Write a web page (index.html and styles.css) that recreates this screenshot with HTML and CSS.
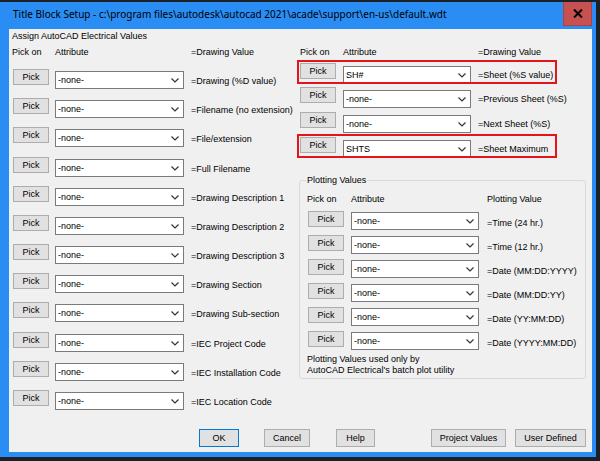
FILE: index.html
```html
<!DOCTYPE html>
<html>
<head>
<meta charset="utf-8">
<title>Title Block Setup</title>
<link rel="stylesheet" href="styles.css">
</head>
<body>
<div class="window">
  <div class="titlebar">
    <span class="title">Title Block Setup - c:\program files\autodesk\autocad 2021\acade\support\en-us\default.wdt</span>
    <div class="close"><svg width="10" height="9" viewBox="0 0 10 9"><path d="M1 0.5 L9 8.5 M9 0.5 L1 8.5" stroke="#000" stroke-width="2" fill="none"/></svg></div>
  </div>
  <div class="client">
    <div class="assign">Assign AutoCAD Electrical Values</div>
    <div class="columns">
      <div class="left">
        <div class="hdr"><span class="lc1">Pick on</span><span class="lc2">Attribute</span><span>=Drawing Value</span></div>
        <div class="lrow"><div class="pick">Pick</div><div class="combo"><span>-none-</span><svg class="chev" width="8" height="5" viewBox="0 0 8 5"><polyline points="0.5,0.5 4,4 7.5,0.5" fill="none" stroke="#333" stroke-width="1.2"/></svg></div><div class="lbl">=Drawing (%D value)</div></div>
        <div class="lrow"><div class="pick">Pick</div><div class="combo"><span>-none-</span><svg class="chev" width="8" height="5" viewBox="0 0 8 5"><polyline points="0.5,0.5 4,4 7.5,0.5" fill="none" stroke="#333" stroke-width="1.2"/></svg></div><div class="lbl">=Filename (no extension)</div></div>
        <div class="lrow tall"><div class="pick">Pick</div><div class="combo"><span>-none-</span><svg class="chev" width="8" height="5" viewBox="0 0 8 5"><polyline points="0.5,0.5 4,4 7.5,0.5" fill="none" stroke="#333" stroke-width="1.2"/></svg></div><div class="lbl">=File/extension</div></div>
        <div class="lrow"><div class="pick">Pick</div><div class="combo"><span>-none-</span><svg class="chev" width="8" height="5" viewBox="0 0 8 5"><polyline points="0.5,0.5 4,4 7.5,0.5" fill="none" stroke="#333" stroke-width="1.2"/></svg></div><div class="lbl">=Full Filename</div></div>
        <div class="lrow"><div class="pick">Pick</div><div class="combo"><span>-none-</span><svg class="chev" width="8" height="5" viewBox="0 0 8 5"><polyline points="0.5,0.5 4,4 7.5,0.5" fill="none" stroke="#333" stroke-width="1.2"/></svg></div><div class="lbl">=Drawing Description 1</div></div>
        <div class="lrow"><div class="pick">Pick</div><div class="combo"><span>-none-</span><svg class="chev" width="8" height="5" viewBox="0 0 8 5"><polyline points="0.5,0.5 4,4 7.5,0.5" fill="none" stroke="#333" stroke-width="1.2"/></svg></div><div class="lbl">=Drawing Description 2</div></div>
        <div class="lrow"><div class="pick">Pick</div><div class="combo"><span>-none-</span><svg class="chev" width="8" height="5" viewBox="0 0 8 5"><polyline points="0.5,0.5 4,4 7.5,0.5" fill="none" stroke="#333" stroke-width="1.2"/></svg></div><div class="lbl">=Drawing Description 3</div></div>
        <div class="lrow"><div class="pick">Pick</div><div class="combo"><span>-none-</span><svg class="chev" width="8" height="5" viewBox="0 0 8 5"><polyline points="0.5,0.5 4,4 7.5,0.5" fill="none" stroke="#333" stroke-width="1.2"/></svg></div><div class="lbl">=Drawing Section</div></div>
        <div class="lrow tall"><div class="pick">Pick</div><div class="combo"><span>-none-</span><svg class="chev" width="8" height="5" viewBox="0 0 8 5"><polyline points="0.5,0.5 4,4 7.5,0.5" fill="none" stroke="#333" stroke-width="1.2"/></svg></div><div class="lbl">=Drawing Sub-section</div></div>
        <div class="lrow"><div class="pick">Pick</div><div class="combo"><span>-none-</span><svg class="chev" width="8" height="5" viewBox="0 0 8 5"><polyline points="0.5,0.5 4,4 7.5,0.5" fill="none" stroke="#333" stroke-width="1.2"/></svg></div><div class="lbl">=IEC Project Code</div></div>
        <div class="lrow"><div class="pick">Pick</div><div class="combo"><span>-none-</span><svg class="chev" width="8" height="5" viewBox="0 0 8 5"><polyline points="0.5,0.5 4,4 7.5,0.5" fill="none" stroke="#333" stroke-width="1.2"/></svg></div><div class="lbl">=IEC Installation Code</div></div>
        <div class="lrow"><div class="pick">Pick</div><div class="combo"><span>-none-</span><svg class="chev" width="8" height="5" viewBox="0 0 8 5"><polyline points="0.5,0.5 4,4 7.5,0.5" fill="none" stroke="#333" stroke-width="1.2"/></svg></div><div class="lbl">=IEC Location Code</div></div>
      </div>
      <div class="right">
        <div class="rhdr"><span class="rc1">Pick on</span><span class="rc2">Attribute</span><span>=Drawing Value</span></div>
        <div class="srow hl h24"><div class="pick">Pick</div><div class="combo scombo"><span>SH#</span><svg class="chev" width="8" height="5" viewBox="0 0 8 5"><polyline points="0.5,0.5 4,4 7.5,0.5" fill="none" stroke="#333" stroke-width="1.2"/></svg></div><div class="slbl">=Sheet (%S value)</div></div>
        <div class="srow h25"><div class="pick">Pick</div><div class="combo scombo"><span>-none-</span><svg class="chev" width="8" height="5" viewBox="0 0 8 5"><polyline points="0.5,0.5 4,4 7.5,0.5" fill="none" stroke="#333" stroke-width="1.2"/></svg></div><div class="slbl">=Previous Sheet (%S)</div></div>
        <div class="srow h25"><div class="pick">Pick</div><div class="combo scombo"><span>-none-</span><svg class="chev" width="8" height="5" viewBox="0 0 8 5"><polyline points="0.5,0.5 4,4 7.5,0.5" fill="none" stroke="#333" stroke-width="1.2"/></svg></div><div class="slbl">=Next Sheet (%S)</div></div>
        <div class="srow hl h24"><div class="pick">Pick</div><div class="combo scombo"><span>SHTS</span><svg class="chev" width="8" height="5" viewBox="0 0 8 5"><polyline points="0.5,0.5 4,4 7.5,0.5" fill="none" stroke="#333" stroke-width="1.2"/></svg></div><div class="slbl">=Sheet Maximum</div></div>
        <fieldset class="plot">
          <legend>Plotting Values</legend>
          <div class="phdr"><span class="pc1">Pick on</span><span class="pc2">Attribute</span><span>Plotting Value</span></div>
          <div class="prow"><div class="pick">Pick</div><div class="combo pcombo"><span>-none-</span><svg class="chev" width="8" height="5" viewBox="0 0 8 5"><polyline points="0.5,0.5 4,4 7.5,0.5" fill="none" stroke="#333" stroke-width="1.2"/></svg></div><div class="plbl">=Time (24 hr.)</div></div>
          <div class="prow"><div class="pick">Pick</div><div class="combo pcombo"><span>-none-</span><svg class="chev" width="8" height="5" viewBox="0 0 8 5"><polyline points="0.5,0.5 4,4 7.5,0.5" fill="none" stroke="#333" stroke-width="1.2"/></svg></div><div class="plbl">=Time (12 hr.)</div></div>
          <div class="prow"><div class="pick">Pick</div><div class="combo pcombo"><span>-none-</span><svg class="chev" width="8" height="5" viewBox="0 0 8 5"><polyline points="0.5,0.5 4,4 7.5,0.5" fill="none" stroke="#333" stroke-width="1.2"/></svg></div><div class="plbl">=Date (MM:DD:YYYY)</div></div>
          <div class="prow"><div class="pick">Pick</div><div class="combo pcombo"><span>-none-</span><svg class="chev" width="8" height="5" viewBox="0 0 8 5"><polyline points="0.5,0.5 4,4 7.5,0.5" fill="none" stroke="#333" stroke-width="1.2"/></svg></div><div class="plbl">=Date (MM:DD:YY)</div></div>
          <div class="prow"><div class="pick">Pick</div><div class="combo pcombo"><span>-none-</span><svg class="chev" width="8" height="5" viewBox="0 0 8 5"><polyline points="0.5,0.5 4,4 7.5,0.5" fill="none" stroke="#333" stroke-width="1.2"/></svg></div><div class="plbl">=Date (YY:MM:DD)</div></div>
          <div class="prow"><div class="pick">Pick</div><div class="combo pcombo"><span>-none-</span><svg class="chev" width="8" height="5" viewBox="0 0 8 5"><polyline points="0.5,0.5 4,4 7.5,0.5" fill="none" stroke="#333" stroke-width="1.2"/></svg></div><div class="plbl">=Date (YYYY:MM:DD)</div></div>
          <div class="note">Plotting Values used only by<br>AutoCAD Electrical's batch plot utility</div>
        </fieldset>
      </div>
    </div>
    <div class="footer">
      <div class="btn ok">OK</div>
      <div class="btn cancel">Cancel</div>
      <div class="btn help">Help</div>
      <div class="btn proj">Project Values</div>
      <div class="btn user">User Defined</div>
    </div>
  </div>
</div>
</body>
</html>
```

FILE: styles.css
```css
* { box-sizing: border-box; }
html, body { margin: 0; padding: 0; }
body {
  background: #1c2128;
  width: 600px;
  height: 461px;
  overflow: hidden;
  font-family: "Liberation Sans", Arial, sans-serif;
  font-size: 9px;
  color: #000;
}
.window {
  margin-top: 2px;
  width: 596px;
  height: 455px;
  background: #2a8df4;
  display: flex;
  flex-direction: column;
}
.titlebar {
  height: 27px;
  display: flex;
  align-items: flex-start;
  flex: none;
}
.title {
  font-family: "Noto Sans", "Liberation Sans", sans-serif;
  font-size: 10px;
  line-height: 24px;
  padding-left: 13px;
  white-space: nowrap;
}
.close {
  margin-left: auto;
  margin-right: 4px;
  width: 29px;
  height: 24px;
  background: #c75050;
  border: 1px solid #a84343;
  border-top: none;
  display: flex;
  align-items: center;
  justify-content: center;
}
.client {
  margin: 0 4px 0 9px;
  height: 423px;
  background: #f0f0f0;
  padding: 1px 0 0 3px;
  flex: none;
}
.assign { line-height: 13px; height: 13px; }
.columns { display: flex; margin-top: 3px; }
.left { width: 285px; flex: none; }
.hdr { display: flex; height: 13px; line-height: 13px; margin-bottom: 10px; }
.lc1 { width: 43px; }
.lc2 { width: 136px; }
.lrow { display: flex; align-items: flex-start; height: 29px; }
.lrow.tall { height: 30px; }
.pick {
  width: 36px;
  height: 16px;
  background: #e1e1e1;
  border: 1px solid #adadad;
  text-align: center;
  line-height: 14px;
  flex: none;
}
.lrow .pick { margin-left: 1px; }
.combo {
  width: 129px;
  height: 18px;
  background: #fff;
  border: 1px solid #7a7a7a;
  display: flex;
  align-items: center;
  justify-content: space-between;
  padding: 0 4px 0 2px;
  flex: none;
}
.lrow .combo { margin-left: 6px; margin-top: 2px; }
.chev { display: block; }
.lbl { margin-left: 7px; margin-top: 6px; line-height: 13px; white-space: nowrap; }

.right { flex: none; width: 295px; display: flex; flex-direction: column; }
.rhdr { display: flex; height: 13px; line-height: 13px; margin-bottom: 1px; padding-left: 3px; }
.rc1 { width: 43px; }
.rc2 { width: 135px; }
.srow {
  position: relative;
  width: 260px;
  display: flex;
  align-items: flex-start;
  padding: 3px 0 0 3px;
}
.srow.h24 { height: 24px; }
.srow.h25 { height: 25px; }
.srow.hl::after {
  content: "";
  position: absolute;
  left: 0; top: 0; right: 0; bottom: 0;
  border: 2px solid #e3151a;
  pointer-events: none;
}
.scombo { width: 128px; margin-left: 7px; margin-top: 3px; }
.slbl { margin-left: 7px; margin-top: 6px; line-height: 13px; white-space: nowrap; }

.plot {
  margin: 16px 0 0 2px;
  width: 287px;
  height: 205px;
  padding: 6px 0 0 6px;
  border: 1px solid #d9d9d9;
  border-radius: 3px;
  min-width: 0;
}
.plot legend { padding: 0 1px; line-height: 13px; font-size: 9px; }
.phdr { display: flex; height: 13px; line-height: 13px; margin-bottom: 5px; padding-left: 1px; }
.pc1 { width: 44px; }
.pc2 { width: 136px; }
.prow { display: flex; align-items: flex-start; height: 24px; }
.prow .pick { margin-left: 2px; }
.pcombo { width: 128px; margin-left: 7px; margin-top: 1px; }
.plbl { margin-left: 8px; margin-top: 6px; line-height: 13px; white-space: nowrap; }
.note { margin-top: -1px; line-height: 11px; padding-left: 1px; }

.footer { display: flex; margin-top: 10px; }
.btn {
  height: 18px;
  background: #e1e1e1;
  border: 1px solid #adadad;
  text-align: center;
  line-height: 16px;
  flex: none;
}
.ok { margin-left: 187px; width: 40px; border-color: #0078d7; }
.cancel { margin-left: 25px; width: 46px; }
.help { margin-left: 26px; width: 39px; }
.proj { margin-left: 56px; width: 75px; }
.user { margin-left: 9px; width: 71px; }
```
